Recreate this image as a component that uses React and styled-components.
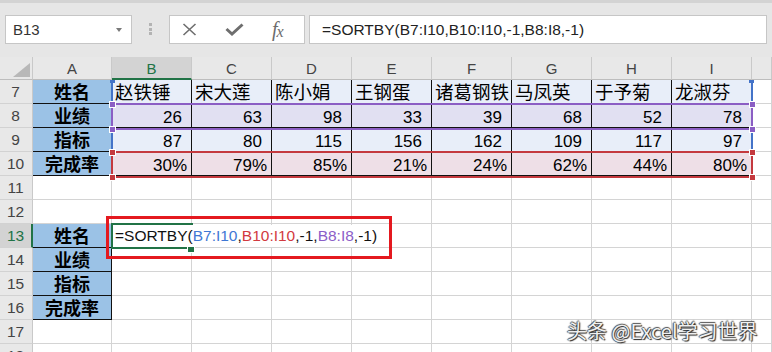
import React from 'react';
import styled, { createGlobalStyle } from 'styled-components';

const GlobalStyle = createGlobalStyle`
  html, body { margin: 0; padding: 0; background: #fff; overflow: hidden; }
  #root { width: 772px; height: 352px; }
`;

const LATIN = `"Liberation Sans", Arial, sans-serif`;
const HAN = `"Noto Sans CJK SC", "Liberation Sans", sans-serif`;

const BLUE = '#4473c8';
const PURPLE = '#8b5ec4';
const RED = '#c4393e';
const GREEN = '#217346';

const Page = styled.div`
  position: relative;
  width: 772px;
  height: 352px;
  overflow: hidden;
  background: #fff;
  font-family: ${LATIN};
`;

/* ---------- toolbar ---------- */
const Toolbar = styled.div`
  box-sizing: border-box;
  height: 57px;
  border-top: 3px solid #d3d3d3;
  background: #e6e6e6;
  display: flex;
  align-items: flex-start;
  padding: 12px 0 0 5px;
`;

const Field = styled.div`
  box-sizing: border-box;
  height: 29px;
  background: #fff;
  border: 1px solid #c6c6c6;
  display: flex;
  align-items: center;
`;

const NameBox = styled(Field)`
  width: 127px;
  justify-content: space-between;
  padding: 0 9px 0 7px;
  font-size: 15px;
  color: #333;
`;

const Caret = styled.span`
  width: 0;
  height: 0;
  border-left: 3.5px solid transparent;
  border-right: 3.5px solid transparent;
  border-top: 4px solid #7a7a7a;
`;

const Grip = styled.div`
  margin: 8px 17px 0 17px;
  display: flex;
  flex-direction: column;
  gap: 1.5px;
`;

const GripDot = styled.span`
  width: 3px;
  height: 3px;
  background: #b3b3b3;
`;

const FxBox = styled(Field)`
  width: 136px;
  padding-left: 12px;
  gap: 28px;
`;

const FxLabel = styled.span`
  font-family: "Liberation Serif", serif;
  font-style: italic;
  color: #6c6c6c;
  font-size: 20px;
  line-height: 1;
  display: flex;
  align-items: baseline;
  margin-top: -2px;
`;

const FxSub = styled.span`
  font-size: 16px;
  margin-left: -1px;
  position: relative;
  top: 1px;
`;

const FormulaInput = styled(Field)`
  margin-left: 4px;
  width: 458px;
  padding-left: 12px;
  font-size: 15.5px;
  color: #222;
`;

/* ---------- sheet ---------- */
const Sheet = styled.div`
  position: relative;
  display: grid;
  grid-template-columns: 33px 79px repeat(8, 80px) 1fr;
  grid-template-rows: 23px;
  grid-auto-rows: 24px;
`;

const HeadCell = styled.div`
  box-sizing: border-box;
  background: ${p => (p.$active ? '#d3d3d3' : '#e8e8e8')};
  color: ${p => (p.$active ? GREEN : '#444')};
  border-right: 1px solid #c9c9c9;
  border-bottom: ${p => (p.$active ? `2px solid ${GREEN}` : '1px solid #bdbdbd')};
  display: flex;
  align-items: center;
  justify-content: center;
  font-size: 15px;
  padding-top: ${p => (p.$active ? 1 : 0)}px;
`;

const Corner = styled(HeadCell)`
  justify-content: flex-end;
  align-items: flex-end;
  padding: 0 2px 2px 0;
`;

const RowHead = styled.div`
  box-sizing: border-box;
  background: ${p => (p.$active ? '#d3d3d3' : '#e8e8e8')};
  color: ${p => (p.$active ? GREEN : '#444')};
  border-right: ${p => (p.$active ? `2px solid ${GREEN}` : '1px solid #c9c9c9')};
  border-bottom: 1px solid #d2d2d2;
  display: flex;
  align-items: center;
  justify-content: center;
  font-size: 15.5px;
  padding-right: ${p => (p.$active ? 0 : 1)}px;
`;

const Cell = styled.div`
  box-sizing: border-box;
  min-width: 0;
  white-space: nowrap;
  background: ${p => p.$bg || '#fff'};
  border-right: 1px solid ${p => (p.$edge ? '#111' : '#d4d4d4')};
  border-bottom: 1px solid ${p => (p.$edge ? '#111' : '#d4d4d4')};
`;

const LabelCell = styled(Cell)`
  display: flex;
  align-items: center;
  justify-content: center;
  padding-bottom: 2px;
  font-family: ${HAN};
  font-weight: 700;
  font-size: 18px;
  line-height: 20px;
  color: #000;
`;

const NameCell = styled(Cell)`
  display: flex;
  align-items: flex-end;
  padding: 0 0 2px 3px;
  font-family: ${HAN};
  font-size: 18.5px;
  line-height: 20px;
  color: #000;
`;

const NumCell = styled(Cell)`
  display: flex;
  align-items: flex-end;
  justify-content: flex-end;
  padding-right: ${p => (p.$pct ? 4 : 9)}px;
  font-size: 17px;
  line-height: 19px;
  color: #000;
`;

/* ---------- overlays ---------- */
const RangeBox = styled.div`
  position: absolute;
  box-sizing: border-box;
  left: 111px;
  width: 642px;
  pointer-events: none;
`;

const BlueRange = styled(RangeBox)`
  top: 23px;
  height: 97px;
  border-left: 2px solid ${BLUE};
  border-right: 2px solid ${BLUE};
`;

const RowRange = styled(RangeBox)`
  height: 27px;
  border: 2px solid ${p => p.$color};
`;

const Handle = styled.span`
  position: absolute;
  box-sizing: border-box;
  width: 7px;
  height: 7px;
  background: ${p => p.$color};
  border: 1px solid #fff;
`;

const Tick = styled.span`
  position: absolute;
  width: 5px;
  height: 3px;
  top: 23px;
  background: ${BLUE};
`;

const EditText = styled.div`
  position: absolute;
  left: 113px;
  top: 168px;
  width: 273px;
  height: 22px;
  background: #fff;
  padding-left: 2px;
  box-sizing: border-box;
  font-size: 15.5px;
  line-height: 22px;
  color: #111;
  white-space: nowrap;
`;

const Ref = styled.span`
  color: ${p => p.$color};
`;

const ActiveBorder = styled.div`
  position: absolute;
  box-sizing: border-box;
  left: 111px;
  top: 166px;
  width: 82px;
  height: 26px;
  border-top: 2px solid ${GREEN};
  border-left: 2px solid ${GREEN};
  border-bottom: 2px solid ${GREEN};
`;

const FillHandle = styled.span`
  position: absolute;
  box-sizing: border-box;
  left: 187px;
  top: 189px;
  width: 8px;
  height: 7px;
  background: ${GREEN};
  border: 1px solid #fff;
`;

const Annotation = styled.div`
  position: absolute;
  box-sizing: border-box;
  left: 106px;
  top: 159px;
  width: 286px;
  height: 43px;
  border: 3px solid #e4191f;
`;

const Watermark = styled.div`
  position: absolute;
  left: 567px;
  top: 318px;
  font-family: ${HAN};
  font-size: 20px;
  line-height: 26px;
  color: #f0f0f0;
  text-shadow: 1px 1px 1px #222, -1px 0 1px #444, 0 -1px 1px #555;
  white-space: nowrap;
`;

/* ---------- data ---------- */
const COLS = ['A', 'B', 'C', 'D', 'E', 'F', 'G', 'H', 'I', ''];
const names = ['赵铁锤', '宋大莲', '陈小娟', '王钢蛋', '诸葛钢铁', '马凤英', '于予菊', '龙淑芬'];
const perf = [26, 63, 98, 33, 39, 68, 52, 78];
const target = [87, 80, 115, 156, 162, 109, 117, 97];
const rate = ['30%', '79%', '85%', '21%', '24%', '62%', '44%', '80%'];

const LABEL_BG = '#9bc2e6';

const rows = [
  { n: 7, label: '姓名', kind: 'name', values: names, tint: '#e8eef9' },
  { n: 8, label: '业绩', kind: 'num', values: perf, tint: '#e1e0f2' },
  { n: 9, label: '指标', kind: 'num', values: target, tint: '#e8eef9' },
  { n: 10, label: '完成率', kind: 'pct', values: rate, tint: '#eedfe7' },
  { n: 11 },
  { n: 12 },
  { n: 13, label: '姓名' },
  { n: 14, label: '业绩' },
  { n: 15, label: '指标' },
  { n: 16, label: '完成率' },
  { n: 17 },
  { n: 18 },
];

const CancelIcon = () => (
  <svg width="15" height="13" viewBox="0 0 15 13">
    <path d="M1.5 1 L13.5 12 M13.5 1 L1.5 12" stroke="#6e6e6e" strokeWidth="1.6" fill="none" />
  </svg>
);

const EnterIcon = () => (
  <svg width="19" height="13" viewBox="0 0 19 13">
    <path d="M1.5 6 L7 11 L17.5 1.5" stroke="#6e6e6e" strokeWidth="3" fill="none" strokeLinejoin="miter" />
  </svg>
);

const CornerMark = () => (
  <svg width="17" height="14" viewBox="0 0 17 14">
    <polygon points="17,0 17,14 0,14" fill="#b8b8b8" />
  </svg>
);

function DataRow({ row }) {
  const cells = [];
  const active = row.n === 13;
  cells.push(<RowHead key="h" $active={active}>{row.n}</RowHead>);
  if (row.label) {
    cells.push(
      <LabelCell key="a" $bg={LABEL_BG} $edge>
        {row.label}
      </LabelCell>
    );
  } else {
    cells.push(<Cell key="a" />);
  }
  for (let i = 0; i < 8; i++) {
    if (row.kind === 'name') {
      cells.push(
        <NameCell key={i} $bg={row.tint} $edge>
          {row.values[i]}
        </NameCell>
      );
    } else if (row.kind) {
      cells.push(
        <NumCell key={i} $bg={row.tint} $edge $pct={row.kind === 'pct'}>
          {row.values[i]}
        </NumCell>
      );
    } else {
      cells.push(<Cell key={i} />);
    }
  }
  cells.push(<Cell key="j" />);
  return cells;
}

const handleSpots = [
  { c: PURPLE, top: 44 },
  { c: PURPLE, top: 69 },
  { c: RED, top: 92 },
  { c: RED, top: 117 },
];

export default function App() {
  return (
    <Page>
      <GlobalStyle />
      <Toolbar>
        <NameBox>
          <span>B13</span>
          <Caret />
        </NameBox>
        <Grip>
          <GripDot />
          <GripDot />
          <GripDot />
        </Grip>
        <FxBox>
          <CancelIcon />
          <EnterIcon />
          <FxLabel>
            f<FxSub>x</FxSub>
          </FxLabel>
        </FxBox>
        <FormulaInput>=SORTBY(B7:I10,B10:I10,-1,B8:I8,-1)</FormulaInput>
      </Toolbar>

      <Sheet>
        <Corner>
          <CornerMark />
        </Corner>
        {COLS.map((c, i) => (
          <HeadCell key={i} $active={c === 'B'}>
            {c}
          </HeadCell>
        ))}
        {rows.map(r => (
          <DataRow key={r.n} row={r} />
        ))}

        <BlueRange />
        <Tick style={{ left: 110 }} />
        <Tick style={{ left: 749 }} />
        <RowRange $color={PURPLE} style={{ top: 46 }} />
        <RowRange $color={RED} style={{ top: 94 }} />
        {handleSpots.map((h, i) => (
          <React.Fragment key={i}>
            <Handle $color={h.c} style={{ left: 109, top: h.top }} />
            <Handle $color={h.c} style={{ left: 749, top: h.top }} />
          </React.Fragment>
        ))}

        <EditText>
          =SORTBY(<Ref $color="#3f78d4">B7:I10</Ref>,<Ref $color="#d23a40">B10:I10</Ref>,-1,
          <Ref $color="#8b5ec8">B8:I8</Ref>,-1)
        </EditText>
        <ActiveBorder />
        <FillHandle />
        <Annotation />
      </Sheet>

      <Watermark>头条 @Excel学习世界</Watermark>
    </Page>
  );
}
